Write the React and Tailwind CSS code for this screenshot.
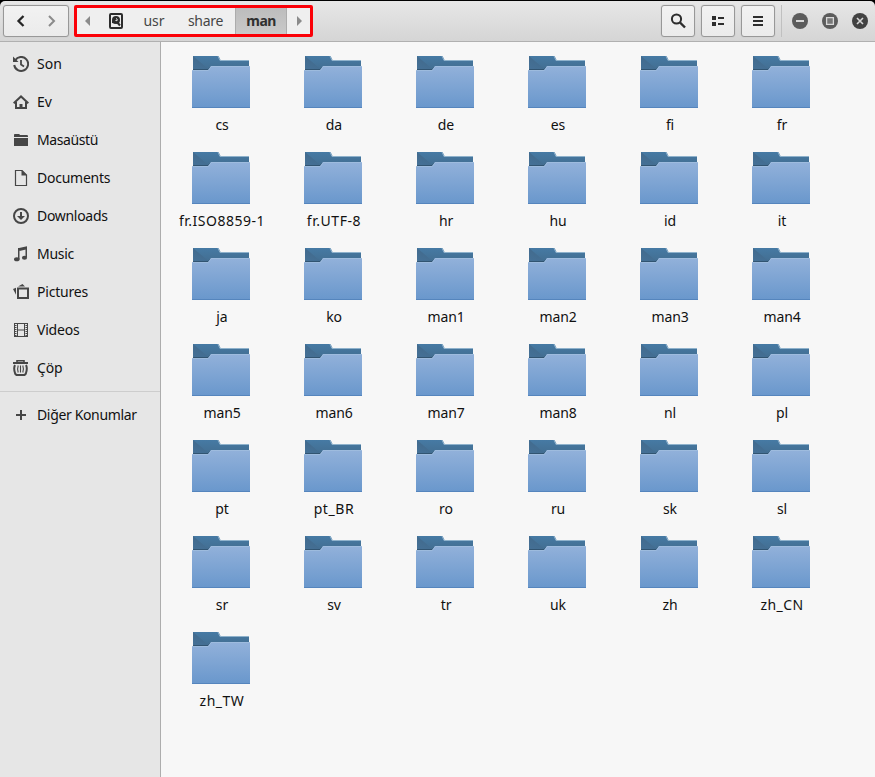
import React from 'react';

const folders = [
  'cs', 'da', 'de', 'es', 'fi', 'fr',
  'fr.ISO8859-1', 'fr.UTF-8', 'hr', 'hu', 'id', 'it',
  'ja', 'ko', 'man1', 'man2', 'man3', 'man4',
  'man5', 'man6', 'man7', 'man8', 'nl', 'pl',
  'pt', 'pt_BR', 'ro', 'ru', 'sk', 'sl',
  'sr', 'sv', 'tr', 'uk', 'zh', 'zh_CN',
  'zh_TW',
];

const labelSpacing = {
  'fr.ISO8859-1': 'tracking-[0.5px]',
  'fr.UTF-8': 'tracking-[0.6px]',
  pt_BR: 'tracking-[0.6px]',
  zh_CN: 'tracking-[0.4px]',
  zh_TW: 'tracking-[0.5px]',
};

function Icon({ children, className = '' }) {
  return (
    <svg width="16" height="16" viewBox="0 0 16 16" fill="none" stroke="#464646" strokeWidth="2" className={`shrink-0 ${className}`}>
      {children}
    </svg>
  );
}

const places = [
  ['Son', 'tracking-normal', <><path d="M2.2 4.2A7 7 0 1 1 1.2 9" /><path d="M0 0.5v5.5h5.5z" fill="#464646" stroke="none" /><path d="M8 4v4.5l3 2" strokeWidth="1.8" /></>],
  ['Ev', 'tracking-normal', <><path d="M0.7 9.2 8 2.4l7.3 6.8" /><path d="M3 8v6h10V8" /><path d="M8 14v-4" strokeWidth="3" /></>],
  ['Masaüstü', 'tracking-[-0.4px]', <g fill="#464646" stroke="none"><path d="M1 2.5 1.8 2h4.4l.8 1h7.2l.8.8V5H1z" /><path d="M1 6h14v8H1z" /></g>],
  ['Documents', 'tracking-[-0.25px]', <><path d="M2.5 .5H9l4.5 4.5v10.5h-11z" strokeWidth="1.2" /><path d="M8.5 0v5.5H14z" fill="#464646" stroke="none" /></>],
  ['Downloads', 'tracking-[-0.3px]', <><circle cx="8" cy="8" r="7" /><path d="M8 4v6" /><path d="M4 8h8l-4 4z" fill="#464646" stroke="none" /></>],
  ['Music', 'tracking-[-0.3px]', <g fill="#464646" stroke="none"><path d="M5 2.2 14 .2v3L6.5 5z" /><path d="M5 2h1.5v11H5zM12.5 1H14v10h-1.5z" /><ellipse cx="3.8" cy="13.3" rx="2.8" ry="2" /><ellipse cx="11.5" cy="11.7" rx="2.6" ry="2" /></g>],
  ['Pictures', 'tracking-[-0.2px]', <><path d="M5 4.5h10v9.5H5z" /><path d="M5 2.5 9.5 0 12 2.5zM0 5l3-1.2v7z" fill="#464646" stroke="none" /></>],
  ['Videos', 'tracking-[-0.2px]', <><path d="M1.5 1v14M14.5 1v14" strokeWidth="1" /><path d="M2.8 1v14M13.2 1v14" strokeWidth="1.5" strokeDasharray="1 1" /><path d="M4.5 1v14M11.5 1v14M1 1.5h14M1 14.5h14M4 8h8" strokeWidth="1" /></>],
  ['Çöp', 'tracking-[-0.2px]', <><path d="M4 2V.8h7V2" strokeWidth="1.6" /><path d="M0 3h15" strokeWidth="2" /><path d="M2 5c-1 2-1 5 0 8q.4 2 2.5 2h6q2.1 0 2.5-2c1-3 1-6 0-8" /><path d="M5.2 5.5q-1.200 3.500 0 7M9.800 5.500q1.200 3.500 0 7M7.500 5.500v7" strokeWidth="1.1" /></>],
];

function Folder() {
  return (
    <svg width="58" height="52" viewBox="0 0 58 52" className="shrink-0">
      <path d="M1 0h25.5l2 4H57v16H1z" fill="url(#folderBack)" />
      <path d="M1 0 14 11 18 14H1z" fill="url(#folderCrease)" />
      <path d="M26 0 28 4.5H57" fill="none" stroke="#8fb2cc" />
      <path d="M1 13h15l2-2v3H1z" fill="#315471" />
      <path d="M0 14h16l3-4h39v42H0z" fill="url(#folderFront)" />
      <path d="M0 14.5h16.3l3-4H58" fill="none" stroke="#a4c0df" strokeOpacity=".7" />
      <path d="M0 51.5h58" stroke="#5585bd" />
    </svg>
  );
}

const button = 'flex h-8 items-center justify-center rounded-[3px] border border-[#989898] bg-linear-to-b from-[#f2f2f2] to-[#ebebeb] shadow-[0_0_1px_#aaa]';

function Header() {
  return (
    <header className="flex h-[41px] shrink-0 items-center rounded-t-[5px] border-b border-[#b0b0b0] bg-linear-to-b from-[#e7e7e7] to-[#d5d5d5] pl-[3px] pr-[7px]">
      <div className={`${button} w-[66px]`}>
        <div className="flex h-full w-8 items-center justify-center pl-px">
          <Icon><path d="m10.5 3-5 5 5 5" stroke="#252525" strokeWidth="2.3" /></Icon>
        </div>
        <div className="flex h-full w-8 items-center justify-center">
          <Icon><path d="m5 3 5 5-5 5" stroke="#8b8b8b" /></Icon>
        </div>
      </div>
      <nav className="ml-[5px] flex h-8 w-[239px] items-stretch rounded-[2px] border-3 border-[#fb0007] bg-[#efefef] text-[14px] text-[#464646]">
        <div className="flex w-[22px] items-center justify-center pr-px"><svg width="5" height="10"><path d="M5 0v10L0 5z" fill="#8b8b8b" /></svg></div>
        <div className="flex w-[32px] items-center justify-center pl-px">
          <Icon>
            <rect x="2" y="1" width="12" height="14" rx="1" stroke="#2d2d2d" />
            <circle cx="8" cy="7" r="4" fill="#2d2d2d" stroke="none" />
            <path d="M4 7v3l3 .5z" fill="#2d2d2d" stroke="none" />
            <path d="M8 5.5q2 .5 1 2.300L7.500 7.500" stroke="#eee" strokeWidth="1" />
            <path d="m8.500 8.500 3.500 4" stroke="#2d2d2d" />
          </Icon>
        </div>
        <div className="flex w-[46px] items-center justify-center">usr</div>
        <div className="flex w-[58px] items-center justify-center pr-px tracking-[-0.3px]">share</div>
        <div className="flex w-[52px] items-center justify-center border-x border-[#acacac] bg-linear-to-b from-[#bcbcbc] to-[#c9c9c9] font-bold tracking-[-0.6px] text-[#303030]">man</div>
        <div className="flex flex-1 items-center justify-center pl-px"><svg width="5" height="10"><path d="M0 0v10l5-5z" fill="#8b8b8b" /></svg></div>
      </nav>
      <div className="ml-auto flex gap-[6px]">
        <div className={`${button} w-[34px]`}><Icon><circle cx="6.5" cy="6" r="4.6" stroke="#2d2d2d" /><path d="m10 9.5 5 5" stroke="#2d2d2d" strokeWidth="2.4" /></Icon></div>
        <div className={`${button} w-[34px]`}><Icon><path d="M2 3h4v4H2zM2 9h4v4H2zM8 4h6v2H8zM8 10h6v2H8z" fill="#2d2d2d" stroke="none" /></Icon></div>
        <div className={`${button} w-[34px]`}><Icon><path d="M3 4h10M3 8h10M3 12h10" stroke="#2d2d2d" /></Icon></div>
      </div>
      <div className="ml-[6px] h-8 w-px bg-[#c0c0c0]" />
      <div className="ml-[10px] flex gap-[14px]">
        <Icon><circle cx="8" cy="8" r="8" fill="#5c5c5c" stroke="none" /><path d="M4 8h8" stroke="#d8d8d8" /></Icon>
        <Icon><circle cx="8" cy="8" r="8" fill="#5c5c5c" stroke="none" /><path d="M4.6 4.6h6.8v6.8H4.6z" fill="#777" stroke="#d8d8d8" strokeWidth="1.3" /></Icon>
        <Icon><circle cx="8" cy="8" r="8" fill="#424242" stroke="none" /><path d="m5 5 6 6m0-6-6 6" stroke="#d8d8d8" strokeWidth="1.6" /></Icon>
      </div>
    </header>
  );
}

export default function App() {
  return (
    <div className="flex h-[777px] w-[875px] flex-col overflow-hidden bg-black pt-px font-['Noto_Sans',sans-serif] text-[14px] leading-5 text-[#111]">
      <svg className="absolute" width="0" height="0">
        <defs>
          <linearGradient id="folderBack" x1="0" y1="0" x2="0" y2="1"><stop stopColor="#467aa4" /><stop offset="1" stopColor="#416888" /></linearGradient>
          <linearGradient id="folderCrease" x1="0" y1="1" x2=".6" y2="0"><stop stopColor="#457197" /><stop offset="1" stopColor="#41698b" /></linearGradient>
          <linearGradient id="folderFront" x1="0" y1="0" x2="0" y2="1"><stop stopColor="#92b1da" /><stop offset="1" stopColor="#6997cc" /></linearGradient>
        </defs>
      </svg>
      <Header />
      <div className="flex min-h-0 flex-1">
        <aside className="w-[161px] shrink-0 border-r border-[#adadad] bg-[#e6e6e6] pt-[3px]">
          {places.map(([name, spacing, icon]) => (
            <div key={name} className="flex h-[38px] items-center gap-2 pl-[13px]">
              <Icon>{icon}</Icon>
              <span className={spacing}>{name}</span>
            </div>
          ))}
          <div className="mt-1 h-px bg-[#cdcdcd]" />
          <div className="mt-1 flex h-[38px] items-center gap-2 pl-[13px]">
            <Icon><path d="M8 3v10M3 8h10" /></Icon>
            <span className="tracking-[-0.35px]">Diğer Konumlar</span>
          </div>
        </aside>
        <main className="grid flex-1 auto-rows-[96px] grid-cols-[repeat(6,112px)] content-start bg-[#f7f7f7] pl-1 pt-[14px]">
          {folders.map((name) => (
            <div key={name} className="flex flex-col items-center">
              <Folder />
              <span className={`mt-[7px] whitespace-nowrap pl-0.5 ${labelSpacing[name] ?? 'tracking-[-0.1px]'}`}>{name}</span>
            </div>
          ))}
        </main>
      </div>
    </div>
  );
}
